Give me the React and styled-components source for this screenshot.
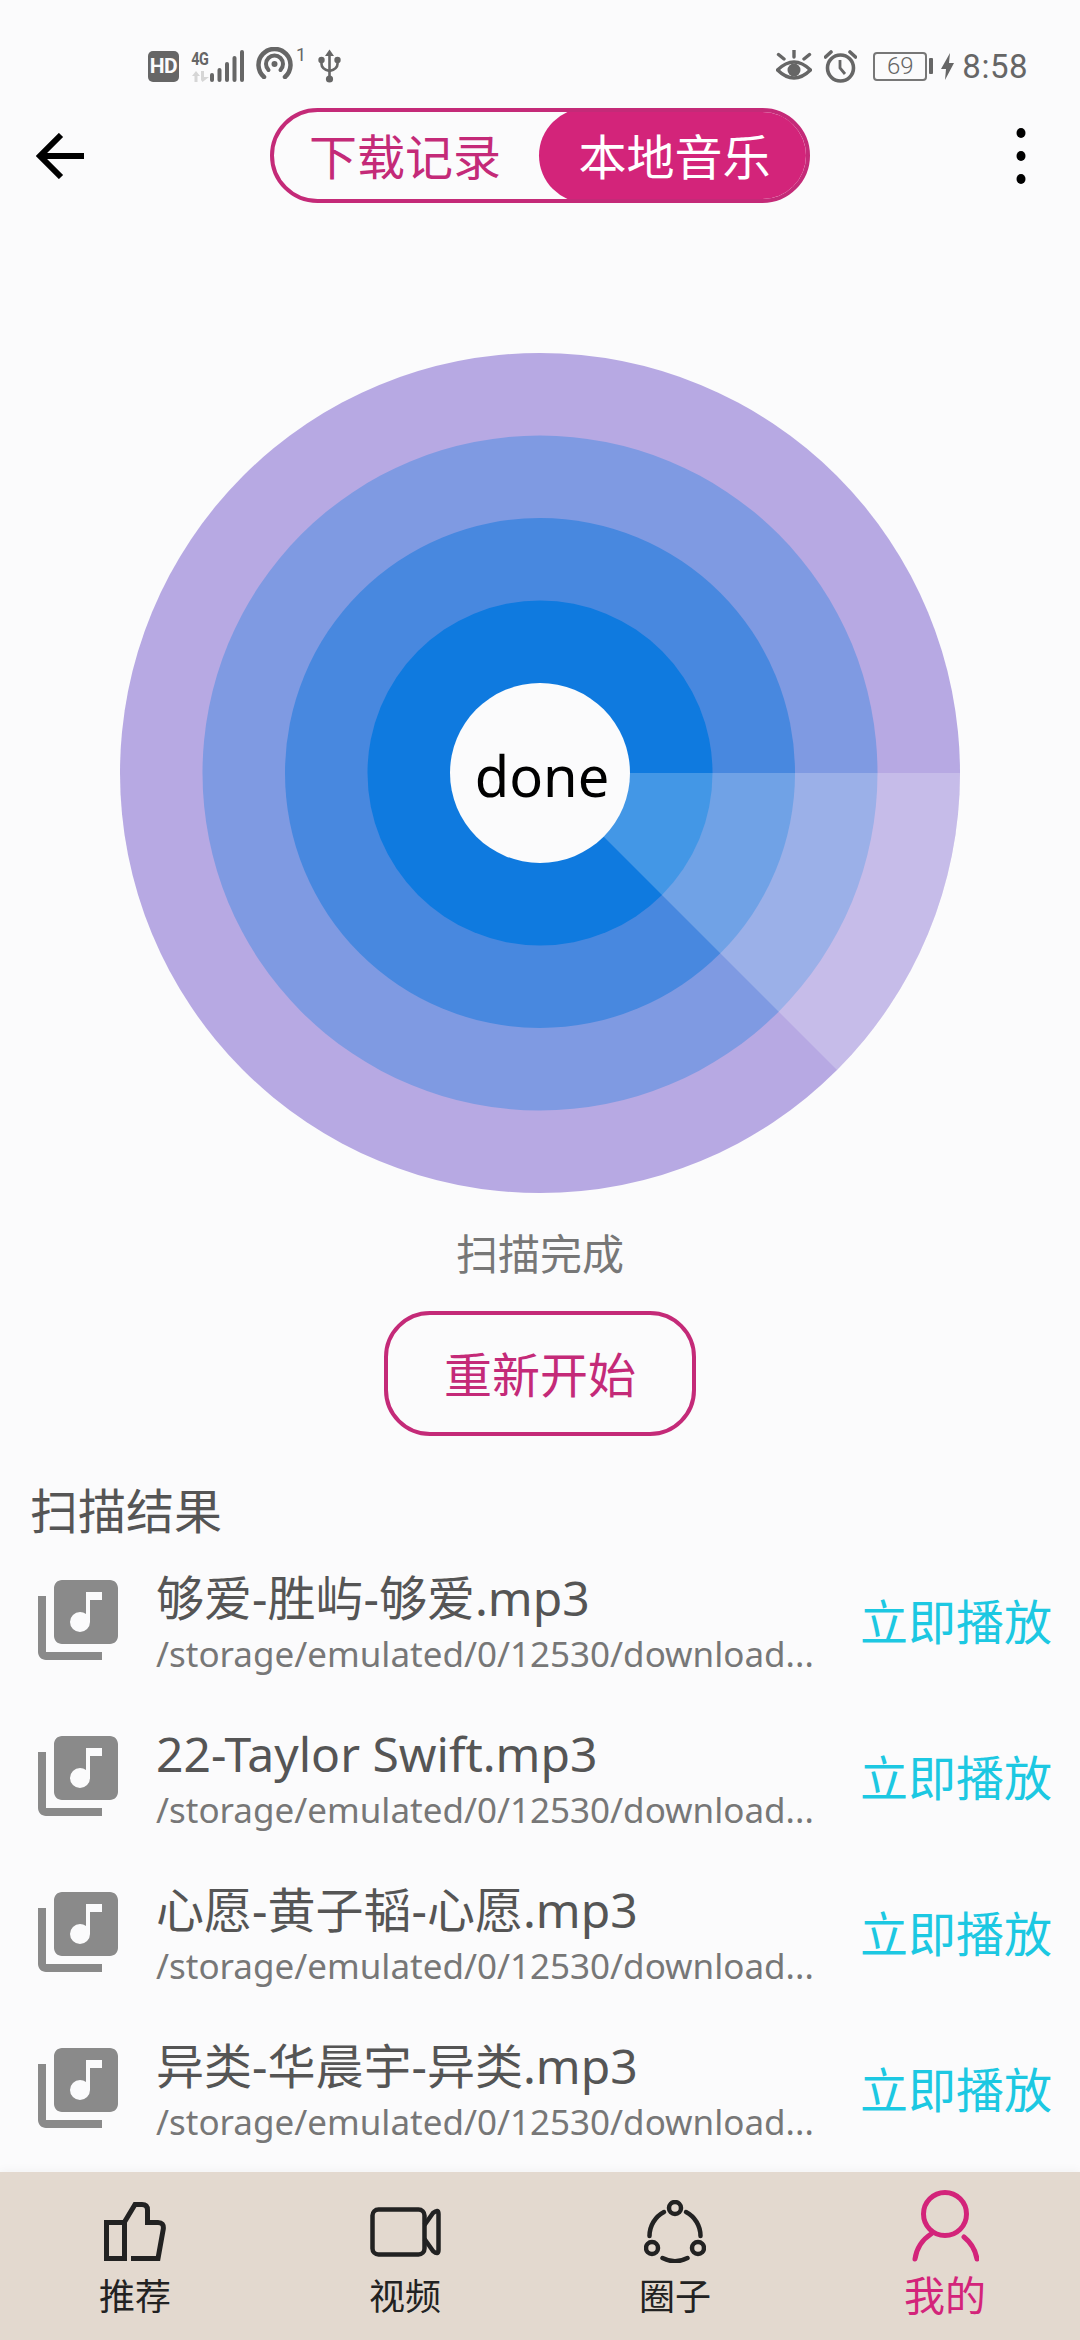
import React from 'react';
import styled, { createGlobalStyle } from 'styled-components';
import { MdLibraryMusic } from 'react-icons/md';

const GlobalStyle = createGlobalStyle`
  html, body {
    margin: 0;
    padding: 0;
    background: #fbfbfc;
  }
  * {
    box-sizing: border-box;
  }
`;

const FONT = '"Noto Sans", "Noto Sans CJK SC", sans-serif';
const PINK = '#d3247a';
const PINK_LINE = '#c42a78';

const Page = styled.div`
  width: 1080px;
  height: 2340px;
  overflow: hidden;
  display: flex;
  flex-direction: column;
  background: #fbfbfc;
  font-family: ${FONT};
`;

/* status bar */
const StatusBar = styled.div`
  height: 108px;
  padding: 24px 52px 0 148px;
  display: flex;
  align-items: center;
  justify-content: space-between;
  color: #666;
`;

const StatusGroup = styled.div`
  display: flex;
  align-items: center;
  gap: 12px;
`;

const HdBadge = styled.span`
  width: 31px;
  height: 31px;
  border-radius: 5px;
  background: #666;
  color: #fbfbfc;
  font: 700 21px/31px "Roboto", sans-serif;
  text-align: center;
  letter-spacing: -0.5px;
`;

const Signal = styled.div`
  display: flex;
  align-items: flex-end;
  gap: 1px;
`;

const NetColumn = styled.div`
  width: 18px;
  display: flex;
  flex-direction: column;
  align-items: center;
  gap: 5px;
`;

const NetLabel = styled.span`
  font: 700 18px/15px "Roboto", sans-serif;
  letter-spacing: -0.5px;
  transform: scaleX(0.8);
`;

const Hotspot = styled.div`
  display: flex;
  align-items: flex-start;
  gap: 3px;
  margin-top: -7px;
`;

const HotspotCount = styled.span`
  font: 400 18px/15px "Roboto", sans-serif;
`;

const Battery = styled.div`
  width: 54px;
  height: 29px;
  margin-left: 4px;
  border: 2px solid #777;
  border-radius: 4px;
  font: 300 24px/25px "Roboto", sans-serif;
  text-align: center;
`;

const BatteryNub = styled.span`
  width: 4px;
  height: 16px;
  margin: 0 -4px 0 -10px;
  border-radius: 1px;
  background: #666;
`;

const Clock = styled.span`
  margin-left: -4px;
  font: 400 33px/33px "Roboto", sans-serif;
  letter-spacing: 0.5px;
`;

/* header */
const Header = styled.header`
  height: 95px;
  padding: 0 36px;
  display: grid;
  grid-template-columns: 1fr 540px 1fr;
  align-items: center;
`;

const MoreDots = styled.svg`
  justify-self: end;
  margin-right: 18px;
`;

const Toggle = styled.div`
  height: 95px;
  display: flex;
  border: 4px solid ${PINK_LINE};
  border-radius: 48px;
  overflow: hidden;
`;

const ToggleTab = styled.div`
  flex: 0 0 ${({ $active }) => ($active ? '271px' : '265px')};
  display: flex;
  align-items: center;
  justify-content: center;
  font-size: 48px;
  color: ${({ $active }) => ($active ? '#fff' : PINK_LINE)};
  background: ${({ $active }) => ($active ? PINK : 'transparent')};
  border-radius: ${({ $active }) => ($active ? '48px' : '0')};
  margin: ${({ $active }) => ($active ? '-4px -4px -4px 0' : '0')};
  padding: ${({ $active }) => ($active ? '0 0 4px' : '0 3px 4px 0')};
`;

/* radar */
const RadarWrap = styled.div`
  position: relative;
  width: 840px;
  height: 840px;
  margin: 150px auto 0;
`;

const RadarLabel = styled.div`
  position: absolute;
  left: 0;
  right: 0;
  top: 0;
  bottom: 0;
  display: flex;
  align-items: center;
  justify-content: center;
  font-size: 56px;
  color: #000;
  padding: 4px 0 0 4px;
`;

const ScanStatus = styled.div`
  margin-top: 30px;
  height: 62px;
  line-height: 62px;
  text-align: center;
  font-size: 42px;
  color: #777;
`;

const RestartButton = styled.button`
  display: block;
  width: 312px;
  height: 125px;
  margin: 26px auto 0;
  padding: 0 0 4px;
  background: transparent;
  border: 4px solid ${PINK_LINE};
  border-radius: 46px;
  color: ${PINK_LINE};
  font-family: ${FONT};
  font-size: 48px;
`;

/* result list */
const SectionTitle = styled.h2`
  margin: 44px 0 0 30px;
  height: 62px;
  font-size: 48px;
  line-height: 62px;
  font-weight: 400;
  color: #555;
`;

const ResultRow = styled.div`
  height: 156px;
  padding: 0 28px 0 30px;
  display: flex;
  align-items: center;
`;

const RowIcon = styled(MdLibraryMusic)`
  flex: none;
  color: #8a8a8a;
`;

const RowInfo = styled.div`
  margin-left: 30px;
  padding-top: 10px;
  display: flex;
  flex-direction: column;
`;

const RowTitle = styled.div`
  font-size: 48px;
  line-height: 58px;
  color: #555;
  white-space: nowrap;
`;

const RowPath = styled.div`
  font-size: 35px;
  line-height: 54px;
  color: #777;
  white-space: nowrap;
`;

const PlayLink = styled.span`
  margin-left: auto;
  padding-bottom: 2px;
  font-size: 48px;
  color: #1cc8e2;
  white-space: nowrap;
`;

/* bottom nav */
const BottomNav = styled.nav`
  margin-top: auto;
  height: 168px;
  display: grid;
  grid-template-columns: repeat(4, 1fr);
  background: #e3d9cf;
  box-shadow: 0 -3px 8px rgba(0, 0, 0, 0.03);
`;

const NavItem = styled.div`
  height: 100%;
  padding-bottom: 22px;
  display: flex;
  flex-direction: column;
  align-items: center;
  justify-content: flex-end;
  color: ${({ $active }) => ($active ? PINK : '#222')};
`;

const NavIconSlot = styled.div`
  height: ${({ $active }) => ($active ? '72px' : '63px')};
  display: flex;
  align-items: center;
`;

const NavLabel = styled.span`
  margin-top: ${({ $active }) => ($active ? '10px' : '13px')};
  font-size: ${({ $active }) => ($active ? '41px' : '36px')};
  line-height: ${({ $active }) => ($active ? '46px' : '42px')};
`;

const Radar = () => (
  <svg width="840" height="840" viewBox="-420 -420 840 840" style={{ display: 'block' }}>
    <circle r="420" fill="#b7a9e3" />
    <circle r="337.5" fill="#7f9ae2" />
    <circle r="255" fill="#4888df" />
    <circle r="172.5" fill="#0f7adf" />
    <path d="M0 0 L420 0 A420 420 0 0 1 296.98 296.98 Z" fill="#fff" fillOpacity="0.22" />
    <circle r="90" fill="#fbfbfc" />
  </svg>
);

const SignalBars = () => (
  <svg width="34" height="32" viewBox="0 0 34 32" fill="currentColor">
    <rect x="0" y="23" width="4" height="9" rx="2" />
    <rect x="7.5" y="18" width="4" height="14" rx="2" />
    <rect x="15" y="12" width="4" height="20" rx="2" />
    <rect x="22.5" y="6" width="4" height="26" rx="2" />
    <rect x="30" y="0" width="4" height="32" rx="2" />
  </svg>
);

const NetArrows = () => (
  <svg width="17" height="11" viewBox="0 0 17 11" fill="#d6d6d6">
    <path d="M4 0 L8 5 H5.5 V11 H2.5 V5 H0 Z" />
    <path d="M9 0 H12 V6 H17 L10.5 11 L9 9 Z" />
  </svg>
);

const HotspotIcon = () => (
  <svg width="37" height="32" viewBox="0 0 37 32" fill="none" stroke="currentColor" strokeWidth="4.5" strokeLinecap="round">
    <path d="M8 30 A16 16 0 1 1 29 30" />
    <path d="M12.5 23 A8.5 8.5 0 1 1 24.5 23" strokeWidth="4" />
    <circle cx="18.5" cy="17" r="3" fill="currentColor" stroke="none" />
  </svg>
);

const UsbIcon = () => (
  <svg width="23" height="34" viewBox="0 0 23 34" fill="none" stroke="currentColor" strokeWidth="2.6">
    <path d="M11.5 3 V28" />
    <path d="M7 7 L11.5 0.5 L16 7 Z" fill="currentColor" stroke="none" />
    <path d="M3.5 12 V15 Q3.5 20 11.5 22 Q19.5 20 19.5 15 V12" />
    <circle cx="3.5" cy="11" r="3.2" fill="currentColor" stroke="none" />
    <circle cx="19.5" cy="11" r="3.2" fill="currentColor" stroke="none" />
    <circle cx="11.5" cy="30" r="3.6" fill="currentColor" stroke="none" />
  </svg>
);

const EyeIcon = () => (
  <svg width="36" height="32" viewBox="0 0 36 32" fill="none" stroke="currentColor" strokeWidth="3.4">
    <path d="M1.5 20 Q18 4 34.5 20 Q18 36 1.5 20 Z" />
    <circle cx="18" cy="20" r="6.5" fill="currentColor" stroke="none" />
    <path d="M18 0.5 V7 M2.5 4.5 L8 9 M33.5 4.5 L28 9" strokeLinecap="round" />
  </svg>
);

const AlarmIcon = () => (
  <svg width="33" height="33" viewBox="0 0 33 33" fill="none" stroke="currentColor" strokeWidth="3.6">
    <circle cx="16.5" cy="18" r="13" />
    <path d="M16 10 V18 L21 24" strokeWidth="2.8" />
    <path d="M1.5 7 L7 2 M31.5 7 L26 2" strokeLinecap="round" />
  </svg>
);

const BoltIcon = () => (
  <svg width="13" height="27" viewBox="0 0 13 27" fill="currentColor">
    <path d="M9 0 L0 16 H5 L4 27 L13 10 H8 Z" />
  </svg>
);

const BackArrow = () => (
  <svg width="48" height="46" viewBox="0 0 48 46" fill="none" stroke="#000" strokeWidth="6">
    <path d="M25 2 L4 23 L25 44" />
    <path d="M5 23 H48" />
  </svg>
);

const ThumbIcon = () => (
  <svg width="62" height="59" viewBox="0 0 62 59" fill="none" stroke="currentColor" strokeWidth="5">
    <rect x="2.5" y="20.5" width="18" height="36" />
    <path d="M27 56.5 H54 L59.3 27 Q60 20.5 54 20.5 H43.5 V8 Q43.5 2.5 38 2.5 H31 L20.5 20" />
  </svg>
);

const VideoIcon = () => (
  <svg width="71" height="50" viewBox="0 0 71 50" fill="none" stroke="currentColor" strokeWidth="4.5">
    <rect x="2.5" y="2.5" width="52" height="45" rx="6" />
    <path d="M54.5 18 L63 6 Q68.5 1.5 68.5 7 V43 Q68.5 48.5 63 44 L54.5 32" />
  </svg>
);

const CircleIcon = () => (
  <svg width="62" height="63" viewBox="0 0 62 63" fill="none" stroke="currentColor" strokeWidth="4.5" strokeLinecap="round">
    <circle cx="31" cy="8" r="6" />
    <circle cx="8" cy="48" r="6" />
    <circle cx="54" cy="48" r="6" />
    <path d="M20 12 A27 27 0 0 0 5.5 36" />
    <path d="M42 12 A27 27 0 0 1 56.5 36" />
    <path d="M18.5 58 A27 27 0 0 0 43.5 58" />
  </svg>
);

const PersonIcon = () => (
  <svg width="67" height="72" viewBox="0 0 67 72" fill="none" stroke="currentColor" strokeWidth="5" strokeLinecap="round">
    <circle cx="33" cy="24" r="21.5" />
    <path d="M3 69 A36 36 0 0 1 19 44" />
    <path d="M52 47 A36 36 0 0 1 65 69" />
  </svg>
);

const results = [
  '够爱-胜屿-够爱.mp3',
  '22-Taylor Swift.mp3',
  '心愿-黄子韬-心愿.mp3',
  '异类-华晨宇-异类.mp3',
];

const navItems = [
  { label: '推荐', Icon: ThumbIcon },
  { label: '视频', Icon: VideoIcon },
  { label: '圈子', Icon: CircleIcon },
  { label: '我的', Icon: PersonIcon, active: true },
];

const App = () => {
  return (
    <Page>
      <GlobalStyle />
      <StatusBar>
        <StatusGroup>
          <HdBadge>HD</HdBadge>
          <Signal>
            <NetColumn>
              <NetLabel>4G</NetLabel>
              <NetArrows />
            </NetColumn>
            <SignalBars />
          </Signal>
          <Hotspot>
            <HotspotIcon />
            <HotspotCount>1</HotspotCount>
          </Hotspot>
          <UsbIcon />
        </StatusGroup>
        <StatusGroup>
          <EyeIcon />
          <AlarmIcon />
          <Battery>69</Battery>
          <BatteryNub />
          <BoltIcon />
          <Clock>8:58</Clock>
        </StatusGroup>
      </StatusBar>

      <Header>
        <BackArrow />
        <Toggle>
          <ToggleTab>下载记录</ToggleTab>
          <ToggleTab $active>本地音乐</ToggleTab>
        </Toggle>
        <MoreDots width="10" height="56" viewBox="0 0 10 56" fill="#000">
          <ellipse cx="5" cy="5" rx="4.5" ry="5" />
          <ellipse cx="5" cy="28" rx="4.5" ry="5" />
          <ellipse cx="5" cy="51" rx="4.5" ry="5" />
        </MoreDots>
      </Header>

      <RadarWrap>
        <Radar />
        <RadarLabel>done</RadarLabel>
      </RadarWrap>

      <ScanStatus>扫描完成</ScanStatus>
      <RestartButton>重新开始</RestartButton>

      <SectionTitle>扫描结果</SectionTitle>
      {results.map((name) => (
        <ResultRow key={name}>
          <RowIcon size={96} />
          <RowInfo>
            <RowTitle>{name}</RowTitle>
            <RowPath>/storage/emulated/0/12530/download...</RowPath>
          </RowInfo>
          <PlayLink>立即播放</PlayLink>
        </ResultRow>
      ))}

      <BottomNav>
        {navItems.map(({ label, Icon, active }) => (
          <NavItem key={label} $active={active}>
            <NavIconSlot $active={active}>
              <Icon />
            </NavIconSlot>
            <NavLabel $active={active}>{label}</NavLabel>
          </NavItem>
        ))}
      </BottomNav>
    </Page>
  );
};

export default App;
